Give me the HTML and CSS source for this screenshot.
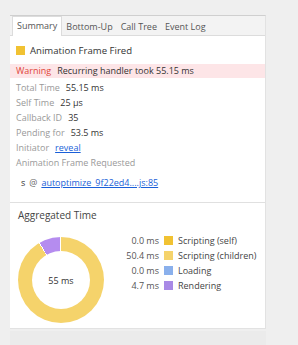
FILE: index.html
```html
<!DOCTYPE html>
<html>
<head>
<meta charset="utf-8">
<link rel="stylesheet" href="styles.css">
</head>
<body>
<div class="panel">
  <div class="tabbar">
    <div class="tab active">Summary</div>
    <div class="tab">Bottom-Up</div>
    <div class="tab">Call Tree</div>
    <div class="tab">Event Log</div>
  </div>
  <div class="details">
    <div class="title"><span class="swatch yellow"></span>Animation Frame Fired</div>
    <div class="warning"><span class="warn-label">Warning</span>Recurring handler took 55.15 ms</div>
    <div class="rows">
      <div class="row"><span class="label">Total Time</span><span class="value">55.15 ms</span></div>
      <div class="row"><span class="label">Self Time</span><span class="value">25 μs</span></div>
      <div class="row"><span class="label">Callback ID</span><span class="value">35</span></div>
      <div class="row"><span class="label">Pending for</span><span class="value">53.5 ms</span></div>
      <div class="row"><span class="label">Initiator</span><a class="link">reveal</a></div>
      <div class="row"><span class="label">Animation Frame Requested</span></div>
    </div>
    <div class="stack"><span class="fn">s</span><span class="at">@</span><a class="link">autoptimize_9f22ed4....js:85</a></div>
  </div>
  <div class="aggregated">
    <div class="agg-title">Aggregated Time</div>
    <div class="agg-body">
      <div class="donut"><div class="hole">55 ms</div></div>
      <div class="legend">
        <div class="lrow"><span class="lval">0.0 ms</span><span class="swatch s-self"></span><span class="lname">Scripting (self)</span></div>
        <div class="lrow"><span class="lval">50.4 ms</span><span class="swatch s-child"></span><span class="lname">Scripting (children)</span></div>
        <div class="lrow"><span class="lval">0.0 ms</span><span class="swatch s-load"></span><span class="lname">Loading</span></div>
        <div class="lrow"><span class="lval">4.7 ms</span><span class="swatch s-render"></span><span class="lname">Rendering</span></div>
      </div>
    </div>
  </div>
</div>
<div class="footer"></div>
</body>
</html>
```
FILE: styles.css
```css
html, body {
  margin: 0;
  padding: 0;
}
body {
  background: #efefef;
  font-family: "Open Sans", "Noto Sans", sans-serif;
  font-size: 9px;
  color: #333;
  width: 298px;
  height: 345px;
  overflow: hidden;
}
.panel {
  margin: 15px 0 0 10px;
  width: 255px;
  background: #fff;
  border-top: 1px solid #cfcfcf;
  border-right: 1px solid #e2e2e2;
}
.tabbar {
  display: flex;
  height: 19px;
  background: #f3f3f3;
  border-bottom: 1px solid #dcdcdc;
  padding-left: 2px;
  align-items: flex-end;
}
.tab {
  height: 18px;
  line-height: 18px;
  padding: 0 4px;
  color: #555;
  margin-bottom: -1px;
}
.tab.active {
  background: #fff;
  border: 1px solid #dcdcdc;
  border-bottom: none;
  height: 19px;
}
.details {
  padding-bottom: 12px;
  border-bottom: 1px solid #e0e0e0;
}
.title {
  display: flex;
  align-items: center;
  gap: 5px;
  height: 14px;
  padding: 7px 6px 7px 6px;
  font-size: 9.6px;
  color: #333;
}
.swatch {
  display: inline-block;
  width: 9px;
  height: 9px;
  flex: none;
}
.yellow { background: #f1c232; }
.warning {
  background: #fde5e7;
  height: 14px;
  line-height: 14px;
  padding-left: 6px;
  color: #333;
}
.warn-label {
  color: #e0453a;
  margin-right: 6px;
}
.rows {
  margin-top: 2px;
}
.row {
  height: 15px;
  line-height: 15px;
  padding-left: 6px;
}
.label {
  color: #999;
  margin-right: 6px;
}
.value {
  color: #333;
}
.link {
  color: #1a5fd8;
  text-decoration: underline;
}
.stack {
  margin-top: 6px;
  height: 14px;
  line-height: 14px;
  padding-left: 11px;
  display: flex;
  align-items: center;
}
.fn {
  margin-right: 4px;
}
.at {
  margin-right: 4px;
  color: #666;
}
.aggregated {
  padding: 5px 8px 5px 8px;
  border-bottom: 1px solid #e2e2e2;
}
.agg-title {
  font-size: 10px;
  color: #444;
  line-height: 14px;
}
.agg-body {
  display: flex;
  margin-top: 4px;
}
.donut {
  margin-top: 11px;
  width: 86px;
  height: 86px;
  border-radius: 50%;
  background: conic-gradient(#f5d36b 0 91.4%, #fff 91.4% 91.8%, #b58cef 91.8% 99.6%, #fff 99.6% 100%);
  display: flex;
  align-items: center;
  justify-content: center;
  flex: none;
}
.hole {
  width: 58px;
  height: 58px;
  border-radius: 50%;
  background: #fff;
  display: flex;
  align-items: center;
  justify-content: center;
  color: #333;
}
.legend {
  display: grid;
  align-content: start;
  margin-left: 20px;
  margin-top: 7px;
}
.lrow {
  display: grid;
  grid-template-columns: 35px 9px auto;
  column-gap: 5px;
  align-items: center;
  height: 15px;
  white-space: nowrap;
}
.lval {
  text-align: right;
  color: #555;
}
.lname {
  color: #444;
}
.s-self { background: #f1c232; }
.s-child { background: #f5d36b; }
.s-load { background: #8ab0ec; }
.s-render { background: #a98ae6; }
.footer {
  margin: 2px 0 0 10px;
  width: 256px;
  height: 20px;
  background: #ebebeb;
}
```
